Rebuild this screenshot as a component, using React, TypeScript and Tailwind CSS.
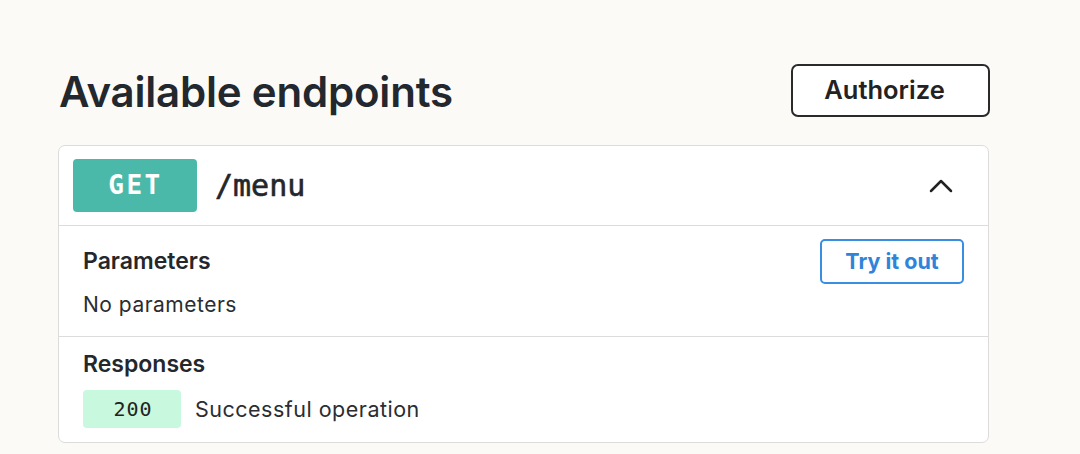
export default function App() {
  return (
    <div className="h-[454px] w-[1080px] bg-[#fcfaf6] font-['Inter',sans-serif] text-[#1f2328]">
      <div className="w-[932px] pl-0 ml-[58px] pt-[64px]">
        <div className="flex items-center justify-between h-[53px]">
          <h1 className="pl-[1px] pt-[2px] text-[42px] font-semibold tracking-[-0.2px] text-[#23272e]">
            Available endpoints
          </h1>
          <button className="h-[53px] w-[199px] rounded-[7px] border-2 border-[#2a2a2a] bg-white pr-[12px] text-[25.5px] font-semibold text-[#222]">
            Authorize
          </button>
        </div>

        <div className="mt-[28px] w-[931px] rounded-[7px] border border-[#dcdcdc] bg-white">
          <div className="flex h-[80px] items-center border-b border-[#dcdcdc] pl-[14px] pr-[35px]">
            <span className="flex h-[53px] w-[124px] items-center justify-center rounded-[4px] bg-[#4bb9a9] pl-[1px] font-['DejaVu_Sans_Mono',monospace] text-[26px] font-bold tracking-[2.5px] text-white">
              GET
            </span>
            <span className="ml-[18px] font-['DejaVu_Sans_Mono',monospace] text-[30px] text-[#23262b] [-webkit-text-stroke:0.6px_#23262b]">
              /menu
            </span>
            <svg className="ml-auto" width="24" height="15" viewBox="0 0 24 15" fill="none">
              <path d="M2 13 L12 3 L22 13" stroke="#222" strokeWidth="2.5" strokeLinecap="round" strokeLinejoin="round" />
            </svg>
          </div>

          <div className="flex h-[111px] justify-between border-b border-[#dcdcdc] pl-[24px] pr-[24px]">
            <div className="pt-[20px]">
              <div className="text-[23px] font-semibold leading-[30px] text-[#24272c]">Parameters</div>
              <div className="mt-[14px] text-[21px] tracking-[0.5px] leading-[30px] text-[#2a2d31]">No parameters</div>
            </div>
            <button className="mt-[13px] h-[45px] w-[144px] rounded-[5px] border-2 border-[#3a8ee2] text-[21.5px] font-bold text-[#2f84da]">
              Try it out
            </button>
          </div>

          <div className="h-[105px] pl-[24px] pt-[12px]">
            <div className="text-[23px] font-semibold leading-[30px] text-[#24272c]">Responses</div>
            <div className="mt-[11px] flex items-center">
              <span className="flex h-[38px] w-[98px] items-center justify-center rounded-[4px] bg-[#c8f8dd] pl-[2px] font-['DejaVu_Sans_Mono',monospace] text-[20px] tracking-[1px] text-[#222]">
                200
              </span>
              <span className="ml-[14px] text-[21.5px] tracking-[0.5px] text-[#2a2d31]">Successful operation</span>
            </div>
          </div>
        </div>
      </div>
    </div>
  )
}
